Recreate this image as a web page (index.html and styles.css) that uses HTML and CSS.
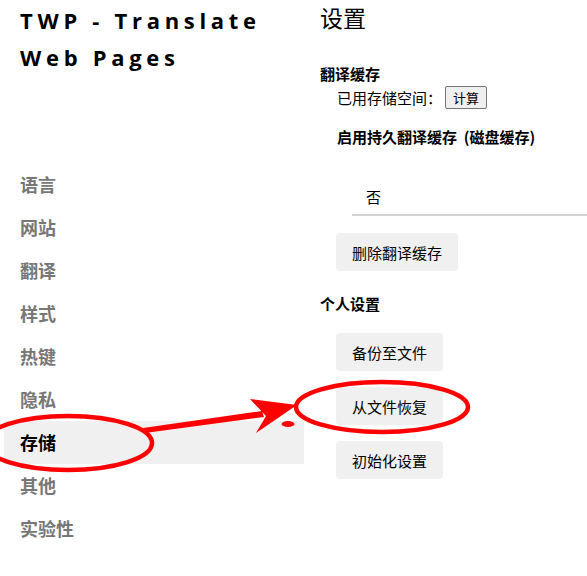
FILE: index.html
```html
<!DOCTYPE html>
<html lang="zh-CN">
<head>
<meta charset="utf-8">
<title>TWP 设置</title>
<link rel="stylesheet" href="styles.css">
</head>
<body>
<div class="page">
  <aside class="sidebar">
    <div class="brand">TWP - Translate<br>Web Pages</div>
    <nav class="nav">
      <div class="nav-item">语言</div>
      <div class="nav-item">网站</div>
      <div class="nav-item">翻译</div>
      <div class="nav-item">样式</div>
      <div class="nav-item">热键</div>
      <div class="nav-item">隐私</div>
      <div class="nav-item active">存储</div>
      <div class="nav-item">其他</div>
      <div class="nav-item">实验性</div>
    </nav>
  </aside>
  <main class="main">
    <h1 class="heading">设置</h1>
    <section class="group">
      <div class="group-title">翻译缓存</div>
      <div class="row usage">已用存储空间：<button class="native-btn">计算</button></div>
      <div class="row sub-title">启用持久翻译缓存&nbsp;&nbsp;(磁盘缓存)</div>
      <div class="select-line"><span class="select-value">否</span></div>
      <button class="btn">删除翻译缓存</button>
    </section>
    <section class="group personal">
      <div class="group-title">个人设置</div>
      <div class="btn-stack">
        <button class="btn">备份至文件</button>
        <button class="btn">从文件恢复</button>
        <button class="btn">初始化设置</button>
      </div>
    </section>
  </main>
</div>
<svg class="annot" width="587" height="576" viewBox="0 0 587 576">
  <ellipse cx="68" cy="443" rx="84" ry="27" fill="none" stroke="#ff0000" stroke-width="4.5"/>
  <ellipse cx="382" cy="407" rx="86" ry="25" fill="none" stroke="#ff0000" stroke-width="4.5"/>
  <polygon points="143,428 262,411 264,417 145,433" fill="#ff0000"/>
  <polygon points="250,399 297,405 256,433 266,416" fill="#ff0000"/>
  <ellipse cx="288" cy="424" rx="6.5" ry="3" fill="#ff0000"/>
</svg>
</body>
</html>
```

FILE: styles.css
```css
html, body {
  margin: 0;
  padding: 0;
  background: #fff;
}
body {
  font-family: "Noto Sans", "Noto Sans CJK SC", sans-serif;
  color: #000;
  position: relative;
  width: 587px;
  height: 576px;
  overflow: hidden;
}
.page {
  display: flex;
}
.sidebar {
  width: 300px;
  padding-left: 4px;
  flex: none;
}
.brand {
  font-family: "Open Sans", "Noto Sans CJK SC", sans-serif;
  font-weight: 700;
  font-size: 22px;
  letter-spacing: 4.7px;
  line-height: 37px;
  padding: 2px 0 0 16px;
  height: 161px;
}
.nav {
  display: flex;
  flex-direction: column;
}
.nav-item {
  height: 43px;
  line-height: 43px;
  padding-left: 16px;
  font-family: "Noto Sans CJK SC", sans-serif;
  font-weight: 700;
  font-size: 18px;
  color: #777;
}
.nav-item.active {
  background: #f0f0f0;
  color: #000;
}
.main {
  padding-left: 16px;
  flex: 1;
  font-family: "Noto Sans CJK SC", sans-serif;
  font-size: 15px;
}
.heading {
  margin: 0;
  font-size: 23px;
  font-weight: 400;
  line-height: 34px;
  height: 64px;
}
.group-title {
  font-weight: 700;
  line-height: 20px;
}
.row {
  padding-left: 17px;
}
.usage {
  display: flex;
  align-items: center;
  height: 26px;
}
.native-btn {
  font-family: "Noto Sans CJK SC", sans-serif;
  font-size: 13px;
  margin-left: 3px;
  height: 23px;
  padding: 0 7px;
  background: #efefef;
  border: 1px solid #767676;
  border-radius: 2px;
  line-height: 19px;
}
.sub-title {
  font-weight: 700;
  line-height: 20px;
  margin-top: 17px;
}
.select-line {
  margin: 40px 0 0 32px;
  border-bottom: 2px solid #d3d3d3;
  height: 27px;
  padding-left: 14px;
  line-height: 20px;
}
.btn {
  display: block;
  font-family: "Noto Sans CJK SC", sans-serif;
  font-size: 15px;
  height: 38px;
  padding: 0 16px;
  background: #f0f0f0;
  border: none;
  border-radius: 4px;
  color: #000;
  margin-left: 16px;
}
.select-line + .btn {
  margin-top: 17px;
}
.personal {
  margin-top: 23px;
}
.btn-stack {
  display: flex;
  flex-direction: column;
  align-items: flex-start;
  gap: 16px;
  margin-top: 19px;
}
.annot {
  position: absolute;
  left: 0;
  top: 0;
  pointer-events: none;
}
```
